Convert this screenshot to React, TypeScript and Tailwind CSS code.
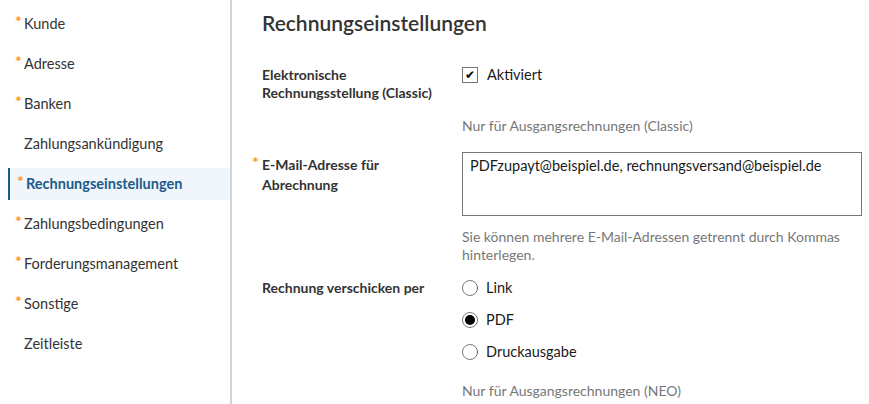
const navItems = [
  { label: "Kunde", required: true },
  { label: "Adresse", required: true },
  { label: "Banken", required: true },
  { label: "Zahlungsankündigung", required: false },
  { label: "Rechnungseinstellungen", required: true, active: true },
  { label: "Zahlungsbedingungen", required: true },
  { label: "Forderungsmanagement", required: true },
  { label: "Sonstige", required: true },
  { label: "Zeitleiste", required: false },
];

function Star() {
  return <span className="absolute -left-[9px] -top-[4px] text-[16px] font-bold text-[#f39c12]">*</span>;
}

function Radio({ checked, label }: { checked?: boolean; label: string }) {
  return (
    <div className="flex h-[32px] items-center gap-[8px]">
      <span className="flex h-[16px] w-[16px] items-center justify-center rounded-full border border-[#777] bg-white">
        {checked && <span className="h-[10px] w-[10px] rounded-full bg-black" />}
      </span>
      <span className="text-[14.5px] text-[#1a1a1a]">{label}</span>
    </div>
  );
}

export default function App() {
  return (
    <div
      className="flex h-[404px] w-[869px] overflow-hidden bg-white text-[#333]"
      style={{ fontFamily: "Lato, 'Open Sans', sans-serif" }}
    >
      <nav className="w-[232px] shrink-0 border-r-2 border-[#d4d4d4] pt-[8px] pl-[8px]">
        {navItems.map((item) => (
          <div
            key={item.label}
            className={`mb-[8px] flex h-[32px] items-center pl-[16px] ${
              item.active ? "border-l-2 border-[#1d5a8c] bg-[#f0f6fb] pl-[14px]" : ""
            }`}
          >
            <span
              className={`relative text-[14.5px] ${
                item.active ? "font-bold text-[#1d5a8c]" : "text-[#333]"
              }`}
            >
              {item.required && <Star />}
              {item.label}
            </span>
          </div>
        ))}
      </nav>

      <main className="flex-1 pl-[30px] pt-[7px]">
        <h1 className="text-[21px] font-semibold text-[#333]">Rechnungseinstellungen</h1>

        <div className="mt-[27px] grid grid-cols-[200px_400px] text-[14px]">
          <div className="font-bold leading-[18px] text-[#333]">
            Elektronische
            <br />
            Rechnungsstellung (Classic)
          </div>
          <div>
            <label className="flex items-center gap-[9px] leading-[18px]">
              <span className="flex h-[16px] w-[16px] items-center justify-center border border-[#777] bg-white text-[12px] leading-none text-black">
                ✔
              </span>
              <span className="text-[14.5px] text-[#1a1a1a]">Aktiviert</span>
            </label>
            <p className="mt-[31px] text-[#777]">Nur für Ausgangsrechnungen (Classic)</p>
          </div>

          <div className="relative mt-[16px] pt-[3px] font-bold leading-[20px] text-[#333]">
            <span className="absolute -left-[10px] top-[0px] text-[16px] font-bold text-[#f39c12]">*</span>
            E-Mail-Adresse für
            <br />
            Abrechnung
          </div>
          <div className="mt-[16px]">
            <div className="h-[64px] w-[400px] border border-[#777] px-[7px] py-[2px] text-[14.5px] text-[#1a1a1a]">
              PDFzupayt@beispiel.de, rechnungsversand@beispiel.de
            </div>
            <p className="mt-[12px] leading-[18px] text-[#777]">
              Sie können mehrere E-Mail-Adressen getrennt durch Kommas hinterlegen.
            </p>
          </div>

          <div className="mt-[8px] pt-[5px] font-bold text-[#333]">Rechnung verschicken per</div>
          <div className="mt-[8px]">
            <Radio label="Link" />
            <Radio label="PDF" checked />
            <Radio label="Druckausgabe" />
            <p className="mt-[12px] text-[#777]">Nur für Ausgangsrechnungen (NEO)</p>
          </div>
        </div>
      </main>
    </div>
  );
}
